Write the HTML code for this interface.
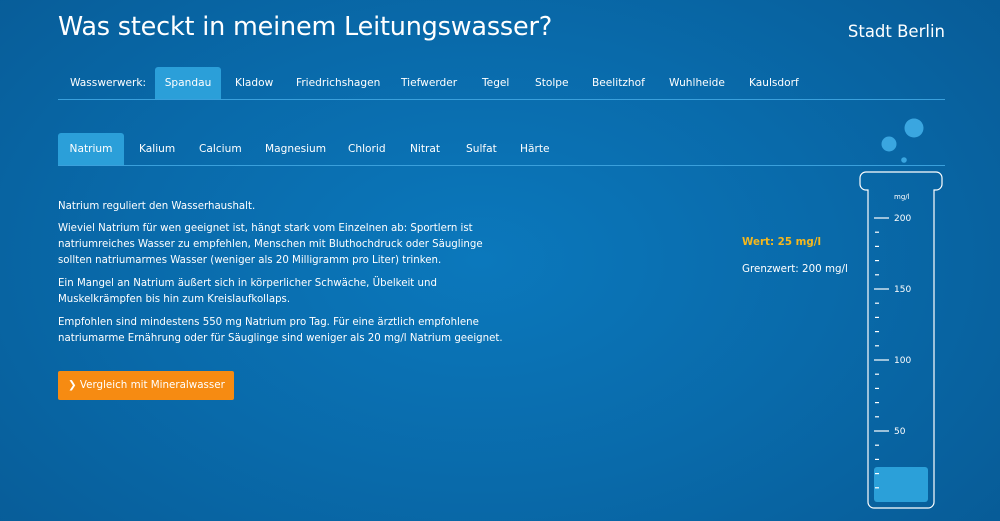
<!DOCTYPE html>
<html><head><meta charset="utf-8"><style>
*{margin:0;padding:0;box-sizing:border-box}
body{width:1000px;height:521px;overflow:hidden;font-family:"DejaVu Sans","Liberation Sans",sans-serif;color:#fff;
background:radial-gradient(ellipse 700px 450px at 480px 260px,#0b78bc 0%,#096aaa 50%,#075a95 100%);position:relative}
h1{position:absolute;left:58px;top:12px;font-weight:normal;font-size:25.5px;letter-spacing:-0.2px}
.city{position:absolute;right:55px;top:22px;font-size:16.5px}
.tabs{position:absolute;left:58px;width:887px;height:33px;border-bottom:1px solid #3aa0dc;font-size:10.6px}
.tabs span{position:absolute;top:0;height:32px;line-height:32px;padding:0 12px}
.tabs .a{background:#2b9fd9;border-radius:3px 3px 0 0;text-align:center}
p{position:absolute;left:58px;font-size:10.2px;line-height:16px;width:480px}
.btn{position:absolute;left:58px;top:371px;width:176px;height:29px;background:#f68b12;border-radius:2px;font-size:10.3px;line-height:29px;padding-left:10px}
</style></head><body>
<h1>Was steckt in meinem Leitungswasser?</h1>
<div class="city">Stadt Berlin</div>
<div class="tabs" style="top:67px">
<span style="left:0">Wasswerwerk:</span>
<span class="a" style="left:97px;width:66px;padding:0">Spandau</span>
<span style="left:165px">Kladow</span>
<span style="left:226px">Friedrichshagen</span>
<span style="left:331px">Tiefwerder</span>
<span style="left:412px">Tegel</span>
<span style="left:465px">Stolpe</span>
<span style="left:522px">Beelitzhof</span>
<span style="left:599px">Wuhlheide</span>
<span style="left:679px">Kaulsdorf</span>
</div>
<div class="tabs" style="top:133px">
<span class="a" style="left:0;width:66px;padding:0">Natrium</span>
<span style="left:69px">Kalium</span>
<span style="left:129px">Calcium</span>
<span style="left:195px">Magnesium</span>
<span style="left:278px">Chlorid</span>
<span style="left:340px">Nitrat</span>
<span style="left:396px">Sulfat</span>
<span style="left:450px">Härte</span>
</div>
<p style="top:199px">Natrium reguliert den Wasserhaushalt.</p>
<p style="top:221px">Wieviel Natrium für wen geeignet ist, hängt stark vom Einzelnen ab: Sportlern ist<br>natriumreiches Wasser zu empfehlen, Menschen mit Bluthochdruck oder Säuglinge<br>sollten natriumarmes Wasser (weniger als 20 Milligramm pro Liter) trinken.</p>
<p style="top:276px">Ein Mangel an Natrium äußert sich in körperlicher Schwäche, Übelkeit und<br>Muskelkrämpfen bis hin zum Kreislaufkollaps.</p>
<p style="top:315px">Empfohlen sind mindestens 550 mg Natrium pro Tag. Für eine ärztlich empfohlene<br>natriumarme Ernährung oder für Säuglinge sind weniger als 20 mg/l Natrium geeignet.</p>
<div class="btn">&#x276F; Vergleich mit Mineralwasser</div>
<div style="position:absolute;left:742px;top:236px;font-size:10.3px;color:#f6b81c;font-weight:bold">Wert: 25 mg/l</div>
<div style="position:absolute;left:742px;top:263px;font-size:10.3px">Grenzwert: 200 mg/l</div>
<svg style="position:absolute;left:0;top:0" width="1000" height="521">
<circle cx="914" cy="128" r="9.5" fill="#3aa6e0"/>
<circle cx="889" cy="144" r="7.5" fill="#3aa6e0"/>
<circle cx="904" cy="160" r="2.8" fill="#3aa6e0"/>
<rect x="874" y="467" width="54" height="35" rx="3" fill="#2ba0d9"/>
<path d="M868 190 H866 a6 6 0 0 1 -6 -6 V178 a6 6 0 0 1 6 -6 H936 a6 6 0 0 1 6 6 V184 a6 6 0 0 1 -6 6 H934 V502 a6 6 0 0 1 -6 6 H874 a6 6 0 0 1 -6 -6 Z" fill="none" stroke="#fff" stroke-width="1.2"/>
<text x="894" y="199" font-size="7" fill="#fff" font-family="DejaVu Sans">mg/l</text>
<g stroke="#fff" stroke-width="1.2">
<line x1="874" y1="218" x2="889" y2="218"/><line x1="874" y1="289" x2="889" y2="289"/>
<line x1="874" y1="360" x2="889" y2="360"/><line x1="874" y1="431" x2="889" y2="431"/>
<g id="m"><line x1="875" y1="232.2" x2="879" y2="232.2"/><line x1="875" y1="246.4" x2="879" y2="246.4"/><line x1="875" y1="260.6" x2="879" y2="260.6"/><line x1="875" y1="274.8" x2="879" y2="274.8"/></g>
<use href="#m" y="71"/><use href="#m" y="142"/><use href="#m" y="213"/>
</g>
<g font-size="9" fill="#fff" font-family="DejaVu Sans">
<text x="894" y="221">200</text><text x="894" y="292">150</text><text x="894" y="363">100</text><text x="894" y="434">50</text>
</g>
</svg>
</body></html>
